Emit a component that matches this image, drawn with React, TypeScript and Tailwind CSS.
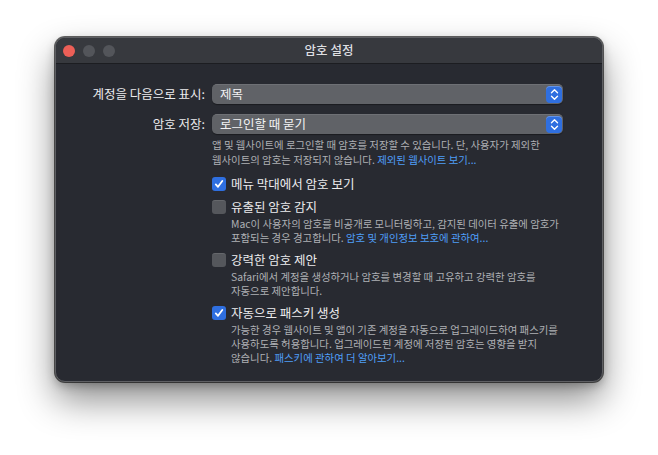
import React from "react";

const font = { fontFamily: '"Noto Sans CJK KR", "Noto Sans", sans-serif' };

function Stepper() {
  return (
    <div className="w-[16px] h-[17px] rounded-[4px] bg-[#2f6fe0] flex items-center justify-center shadow-[inset_0_1px_0_rgba(255,255,255,0.25)]">
      <svg width="9" height="13" viewBox="0 0 9 13" fill="none" stroke="white" strokeWidth="1.4" strokeLinecap="round" strokeLinejoin="round">
        <path d="M1.5 4.8 L4.5 1.8 L7.5 4.8" />
        <path d="M1.5 8.2 L4.5 11.2 L7.5 8.2" />
      </svg>
    </div>
  );
}

function Popup({ text }: { text: string }) {
  return (
    <div className="flex-1 h-[20px] rounded-[5px] bg-[#606267] border-t border-[#6e7075] flex items-center justify-between pl-[8px] pr-[1px] shadow-[0_1px_1px_rgba(0,0,0,0.35)]">
      <span className="text-[12.5px] text-[#f2f2f4] leading-none">{text}</span>
      <Stepper />
    </div>
  );
}

function Check({ checked }: { checked: boolean }) {
  if (checked)
    return (
      <div className="w-[14px] h-[14px] rounded-[3px] bg-[#2f6fe0] flex items-center justify-center shrink-0">
        <svg width="10" height="10" viewBox="0 0 10 10" fill="none" stroke="white" strokeWidth="1.8" strokeLinecap="round" strokeLinejoin="round">
          <path d="M1.8 5.4 L4 7.8 L8.3 2" />
        </svg>
      </div>
    );
  return <div className="w-[14px] h-[14px] rounded-[3px] bg-[#55575c] border-t border-[#65676b] shrink-0" />;
}

function Option({ checked, title, children }: { checked: boolean; title: string; children?: React.ReactNode }) {
  return (
    <div className="flex flex-col">
      <div className="flex items-center gap-[5px] h-[16px]">
        <Check checked={checked} />
        <span className="text-[12.5px] text-[#ececee] leading-none">{title}</span>
      </div>
      {children && (
        <div className="pl-[19px] mt-[2px] text-[10.4px] leading-[14px] text-[#aeb0b4] whitespace-nowrap">{children}</div>
      )}
    </div>
  );
}

const Link = ({ children }: { children: React.ReactNode }) => (
  <span className="text-[#4f9ef8]">{children}</span>
);

export default function App() {
  return (
    <div className="w-[658px] h-[455px] bg-white overflow-hidden" style={font}>
      <div className="pt-[37px] pl-[55px]">
        <div className="w-[548px] h-[345px] rounded-[10px] bg-[#282a31] border border-[#5e5f63] shadow-[0_0_0_1px_rgba(0,0,0,0.6),0_18px_36px_rgba(0,0,0,0.45),0_4px_10px_rgba(0,0,0,0.25)] overflow-hidden flex flex-col">
          <div className="h-[26px] bg-[#37393e] border-b border-[#1c1d21] flex items-center relative shrink-0">
            <div className="flex gap-[8px] pl-[7px]">
              <div className="w-[12px] h-[12px] rounded-full bg-[#ed5f57]" />
              <div className="w-[12px] h-[12px] rounded-full bg-[#53555a]" />
              <div className="w-[12px] h-[12px] rounded-full bg-[#53555a]" />
            </div>
            <div className="absolute inset-0 flex items-center justify-center text-[12.5px] font-medium text-[#dedfe1] pointer-events-none">
              암호 설정
            </div>
          </div>
          <div className="pt-[20px] pr-[39px] flex flex-col">
            <div className="flex items-center">
              <div className="w-[156px] text-right pr-[7px] text-[12.5px] text-[#ececee] leading-none">계정을 다음으로 표시:</div>
              <Popup text="제목" />
            </div>
            <div className="flex items-center mt-[10px]">
              <div className="w-[156px] text-right pr-[7px] text-[12.5px] text-[#ececee] leading-none">암호 저장:</div>
              <Popup text="로그인할 때 묻기" />
            </div>
            <div className="pl-[156px] mt-[3px] text-[10.4px] leading-[15px] text-[#aeb0b4] whitespace-nowrap">
              <div>앱 및 웹사이트에 로그인할 때 암호를 저장할 수 있습니다. 단, 사용자가 제외한</div>
              <div>웹사이트의 암호는 저장되지 않습니다. <Link>제외된 웹사이트 보기...</Link></div>
            </div>
            <div className="pl-[156px] mt-[9px] flex flex-col gap-[7px]">
              <Option checked title="메뉴 막대에서 암호 보기" />
              <Option checked={false} title="유출된 암호 감지">
                <div>Mac이 사용자의 암호를 비공개로 모니터링하고, 감지된 데이터 유출에 암호가</div>
                <div>포함되는 경우 경고합니다. <Link>암호 및 개인정보 보호에 관하여...</Link></div>
              </Option>
              <Option checked={false} title="강력한 암호 제안">
                <div>Safari에서 계정을 생성하거나 암호를 변경할 때 고유하고 강력한 암호를</div>
                <div>자동으로 제안합니다.</div>
              </Option>
              <Option checked title="자동으로 패스키 생성">
                <div>가능한 경우 웹사이트 및 앱이 기존 계정을 자동으로 업그레이드하여 패스키를</div>
                <div>사용하도록 허용합니다. 업그레이드된 계정에 저장된 암호는 영향을 받지</div>
                <div>않습니다. <Link>패스키에 관하여 더 알아보기...</Link></div>
              </Option>
            </div>
          </div>
        </div>
      </div>
    </div>
  );
}
